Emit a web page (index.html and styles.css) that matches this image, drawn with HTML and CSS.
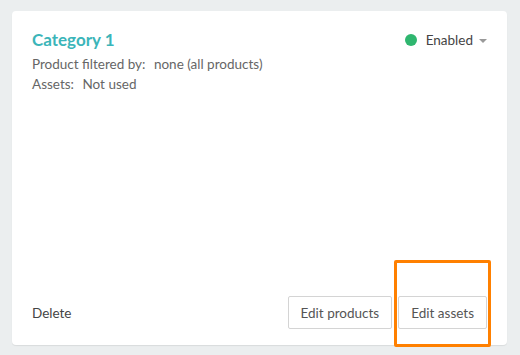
FILE: index.html
```html
<html lang="en"><head>
    <meta charset="UTF-8">
    <meta name="viewport" content="width=device-width, initial-scale=1.0">
    <title>Category</title>
    <link rel="stylesheet" href="styles.css">
</head>

<body>
    <!-- category card -->
    <div class="card">
        <div class="card-head">
            <span class="title">Category 1</span>
            <!-- status dropdown -->
            <div class="status">
                <span class="dot"></span>
                <span>Enabled</span>
                <span class="caret"></span>
            </div>
        </div>
        <div class="info">
            <span class="label">Product filtered by:</span>
            <span>none (all products)</span>
        </div>
        <div class="info">
            <span class="label">Assets:</span>
            <span>Not used</span>
        </div>
        <div class="card-foot">
            <a class="link">Delete</a>
            <div class="button-area">
                <button class="btn">Edit products</button>
                <div class="focus">
                    <button class="btn">Edit assets</button>
                    <div class="highlight"></div>
                </div>
            </div>
        </div>
    </div>
</body></html>
```

FILE: styles.css
```css
body {
    font-family: Lato, "Open Sans", sans-serif;
    margin: 0px;
    background-color: #ebeeef;
    padding: 11px 13px 10px 12px;
}

.card {
    display: flex;
    flex-direction: column;
    height: 334px;
    box-sizing: border-box;
    background-color: white;
    border-radius: 4px;
    box-shadow: 0px 1px 1px rgba(0, 0, 0, 0.08);
    padding: 18px 20px 16px 20px;
}

.card-head {
    display: flex;
    justify-content: space-between;
    align-items: center;
    margin-bottom: 4px;
}

.title {
    color: #3bb5b9;
    font-weight: bold;
    font-size: 17px;
}

.status {
    display: flex;
    align-items: center;
    color: #444;
    font-size: 13.5px;
}

.dot {
    width: 12px;
    height: 12px;
    border-radius: 50%;
    background-color: #2fb66f;
    margin-right: 9px;
}

.caret {
    width: 0px;
    height: 0px;
    border-left: 4px solid transparent;
    border-right: 4px solid transparent;
    border-top: 4px solid #999;
    margin-left: 6px;
    margin-top: 2px;
}

.info {
    color: #666;
    font-size: 13.5px;
    line-height: 20px;
}

.info .label {
    margin-right: 5px;
}

.card-foot {
    display: flex;
    justify-content: space-between;
    align-items: center;
    margin-top: auto;
}

.link {
    color: #444;
    font-size: 13.5px;
}

.button-area {
    display: flex;
    gap: 6px;
}

.btn {
    font-family: inherit;
    font-size: 13.5px;
    color: #555;
    background-color: white;
    border: 1px solid #d4d4d4;
    border-radius: 2px;
    height: 33px;
    padding: 0px 12px;
}

.focus {
    position: relative;
}

.highlight {
    position: absolute;
    left: -4px;
    right: -4px;
    top: -36px;
    bottom: -18px;
    border: 3px solid #ff8000;
    border-radius: 2px;
}
```
